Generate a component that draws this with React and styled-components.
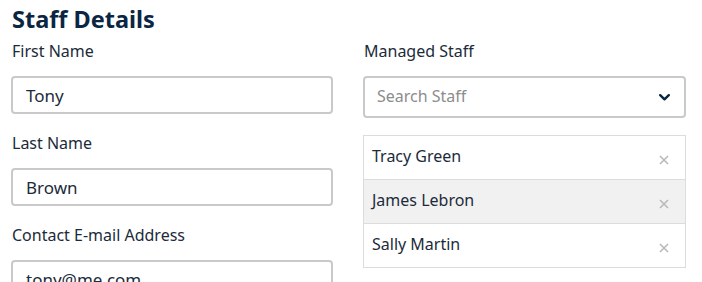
import React from "react"
import styled, { createGlobalStyle } from "styled-components"

const GlobalStyle = createGlobalStyle`
  body {
    margin: 0;
    background: #ffffff;
    font-family: "Noto Sans", "Open Sans", sans-serif;
    color: #1c2b3a;
  }
`

const Page = styled.div`
  padding: 4px 0 0 11px;
  width: 702px;
  height: 282px;
  overflow: hidden;
  box-sizing: border-box;
`

const Title = styled.h2`
  margin: 0 0 4px 1px;
  font-size: 23.5px;
  line-height: 30px;
  font-weight: 700;
  color: #0b2643;
`

const Columns = styled.div`
  display: grid;
  grid-template-columns: 322px 323px;
  column-gap: 30px;
  align-items: start;
`

const Column = styled.div`
  display: flex;
  flex-direction: column;
`

const Field = styled.div`
  display: flex;
  flex-direction: column;
  margin-bottom: 16px;
`

const Label = styled.label`
  display: block;
  margin: 2px 0 14px 1px;
  font-size: 16px;
  line-height: 22px;
  color: #1c2b3a;
`

const TextInput = styled.input`
  box-sizing: border-box;
  width: 100%;
  height: 38px;
  padding: 0 13px;
  border: 2px solid #c9c9c9;
  border-radius: 4px;
  font-family: inherit;
  font-size: 17px;
  color: #1c2b3a;
  background: #fff;
  outline: none;
`

const Select = styled.div`
  box-sizing: border-box;
  display: flex;
  align-items: center;
  justify-content: space-between;
  height: 42px;
  padding: 0 14px 0 12px;
  border: 2px solid #c9c9c9;
  border-radius: 4px;
  margin-bottom: 17px;
`

const Placeholder = styled.span`
  font-size: 16px;
  color: #8c8c8c;
  margin-top: -2px;
`

const StaffList = styled.ul`
  list-style: none;
  margin: 0;
  padding: 0;
  border: 1px solid #dcdcdc;
`

const StaffRow = styled.li`
  display: flex;
  align-items: center;
  justify-content: space-between;
  height: 43px;
  padding: 0 16px 0 8px;
  background: ${(p) => (p.$highlight ? "#f1f1f1" : "#ffffff")};
  border-top: ${(p) => (p.$first ? "none" : "1px solid #dcdcdc")};
  font-size: 16px;
  color: #1c2b3a;
`

const Name = styled.span`
  margin-top: -4px;
`

const Remove = styled.svg`
  width: 10px;
  height: 10px;
  margin-top: 4px;
`

const Chevron = () => (
  <svg width="11" height="7" viewBox="0 0 11 7">
    <path d="M1.2 1.2 L5.5 5.3 L9.8 1.2" fill="none" stroke="#0b2643" strokeWidth="2.4" strokeLinecap="round" strokeLinejoin="round" />
  </svg>
)

const staff = ["Tracy Green", "James Lebron", "Sally Martin"]

export default function App() {
  return (
    <Page>
      <GlobalStyle />
      <Title>Staff Details</Title>
      <Columns>
        <Column>
          <Field>
            <Label>First Name</Label>
            <TextInput defaultValue="Tony" />
          </Field>
          <Field>
            <Label>Last Name</Label>
            <TextInput defaultValue="Brown" />
          </Field>
          <Field>
            <Label>Contact E-mail Address</Label>
            <TextInput defaultValue="tony@me.com" />
          </Field>
        </Column>
        <Column>
          <Label>Managed Staff</Label>
          <Select>
            <Placeholder>Search Staff</Placeholder>
            <Chevron />
          </Select>
          <StaffList>
            {staff.map((name, i) => (
              <StaffRow key={name} $first={i === 0} $highlight={i === 1}>
                <Name>{name}</Name>
                <Remove viewBox="0 0 10 10">
                  <path d="M1 1 L9 9 M9 1 L1 9" stroke="#b9b9b9" strokeWidth="1.6" />
                </Remove>
              </StaffRow>
            ))}
          </StaffList>
        </Column>
      </Columns>
    </Page>
  )
}
